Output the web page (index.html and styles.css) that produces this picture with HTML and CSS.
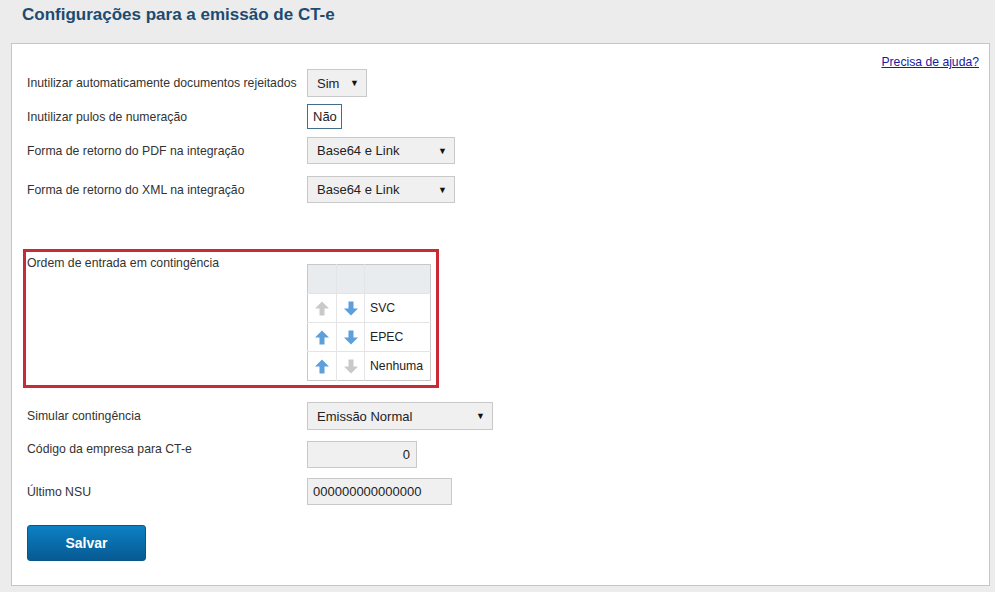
FILE: index.html
```html
<!DOCTYPE html>
<html lang="pt">
<head>
<meta charset="utf-8">
<title>Configurações para a emissão de CT-e</title>
<link rel="stylesheet" href="styles.css">
</head>
<body>
<h1 class="title">Configurações para a emissão de CT-e</h1>
<div class="panel">
  <div class="help"><a href="#">Precisa de ajuda?</a></div>

  <div class="row r1">
    <div class="label">Inutilizar automaticamente documentos rejeitados</div>
    <div class="select w-sim"><span>Sim</span><span class="caret">▼</span></div>
  </div>

  <div class="row r2">
    <div class="label">Inutilizar pulos de numeração</div>
    <div class="toggle">Não</div>
  </div>

  <div class="row r3">
    <div class="label">Forma de retorno do PDF na integração</div>
    <div class="select w-base"><span>Base64 e Link</span><span class="caret">▼</span></div>
  </div>

  <div class="row r4">
    <div class="label">Forma de retorno do XML na integração</div>
    <div class="select w-base"><span>Base64 e Link</span><span class="caret">▼</span></div>
  </div>

  <div class="highlight">
    <div class="label top">Ordem de entrada em contingência</div>
    <table class="order">
      <tr class="head"><td class="c1"></td><td class="c2"></td><td class="c3"></td></tr>
      <tr>
        <td class="c1"><svg class="arr off" viewBox="0 0 14 14"><path d="M7 0 L14 7 L9.5 7 L9.5 14 L4.5 14 L4.5 7 L0 7 Z"/></svg></td>
        <td class="c2"><svg class="arr on down" viewBox="0 0 14 14"><path d="M7 0 L14 7 L9.5 7 L9.5 14 L4.5 14 L4.5 7 L0 7 Z"/></svg></td>
        <td class="c3">SVC</td>
      </tr>
      <tr>
        <td class="c1"><svg class="arr on" viewBox="0 0 14 14"><path d="M7 0 L14 7 L9.5 7 L9.5 14 L4.5 14 L4.5 7 L0 7 Z"/></svg></td>
        <td class="c2"><svg class="arr on down" viewBox="0 0 14 14"><path d="M7 0 L14 7 L9.5 7 L9.5 14 L4.5 14 L4.5 7 L0 7 Z"/></svg></td>
        <td class="c3">EPEC</td>
      </tr>
      <tr>
        <td class="c1"><svg class="arr on" viewBox="0 0 14 14"><path d="M7 0 L14 7 L9.5 7 L9.5 14 L4.5 14 L4.5 7 L0 7 Z"/></svg></td>
        <td class="c2"><svg class="arr off down" viewBox="0 0 14 14"><path d="M7 0 L14 7 L9.5 7 L9.5 14 L4.5 14 L4.5 7 L0 7 Z"/></svg></td>
        <td class="c3">Nenhuma</td>
      </tr>
    </table>
  </div>

  <div class="row r5">
    <div class="label">Simular contingência</div>
    <div class="select w-sim2"><span>Emissão Normal</span><span class="caret">▼</span></div>
  </div>

  <div class="row r6">
    <div class="label up">Código da empresa para CT-e</div>
    <div class="input w-cod right">0</div>
  </div>

  <div class="row r7">
    <div class="label">Último NSU</div>
    <div class="input w-nsu">000000000000000</div>
  </div>

  <button class="btn">Salvar</button>
</div>
</body>
</html>
```

FILE: styles.css
```css
html, body {
  margin: 0;
  padding: 0;
}
body {
  background: #ececec;
  font-family: "Liberation Sans", Arial, sans-serif;
  color: #333;
  font-size: 12px;
  width: 995px;
  height: 592px;
  overflow: hidden;
}
.title {
  margin: 0;
  padding: 5px 0 0 22px;
  height: 43px;
  box-sizing: border-box;
  font-size: 17px;
  line-height: 20px;
  font-weight: bold;
  color: #1d4b70;
}
.panel {
  margin-left: 11px;
  width: 979px;
  box-sizing: border-box;
  background: #fff;
  border: 1px solid #c6c6c6;
  padding: 0 10px 24px 15px;
}
.help {
  text-align: right;
  padding-top: 11px;
  line-height: 14px;
  height: 25px;
  box-sizing: border-box;
}
.help a {
  color: #1a1aa0;
  text-decoration: underline;
  font-size: 12.2px;
}
.row {
  display: flex;
  align-items: center;
}
.label {
  width: 280px;
  flex: none;
  line-height: 14px;
  font-size: 12.25px;
  color: #333;
}
.r1 { height: 28px; }
.r2 { height: 25px; margin-top: 7px; }
.r3 { height: 27px; margin-top: 8px; }
.r4 { height: 27px; margin-top: 12px; }
.r5 { height: 28px; margin-top: 14px; }
.r6 { height: 27px; margin-top: 11px; }
.r7 { height: 27px; margin-top: 10px; }
.label.up { align-self: flex-start; padding-top: 1px; }

.select {
  box-sizing: border-box;
  height: 100%;
  background: #f0f0f0;
  border: 1px solid #c9c9c9;
  display: flex;
  align-items: center;
  justify-content: space-between;
  padding: 0 7px 0 9px;
  font-size: 13px;
  color: #222;
}
.caret {
  font-size: 9px;
  color: #111;
}
.w-sim { width: 60px; }
.w-base { width: 148px; }
.w-sim2 { width: 186px; }

.toggle {
  box-sizing: border-box;
  height: 25px;
  width: 35px;
  border: 1px solid #3f6f8c;
  background: #fff;
  font-size: 13px;
  color: #222;
  display: flex;
  align-items: center;
  padding-left: 5px;
}

.input {
  box-sizing: border-box;
  height: 100%;
  background: #f0f0f0;
  border: 1px solid #c9c9c9;
  display: flex;
  align-items: center;
  padding: 0 6px 0 5px;
  font-size: 13px;
  color: #222;
}
.input.right { justify-content: flex-end; }
.w-cod { width: 110px; }
.w-nsu { width: 145px; }

.highlight {
  margin-top: 46px;
  margin-left: -4px;
  width: 416px;
  height: 139px;
  box-sizing: border-box;
  border: 3px solid #c92a35;
  display: flex;
  align-items: flex-start;
  padding: 4px 0 0 1px;
}
.order {
  margin-top: 8px;
  border-collapse: collapse;
  border: 1px solid #c8c8c8;
  font-size: 12.25px;
  color: #222;
}
.order td {
  height: 28px;
  padding: 0;
  border-top: 1px solid #e4e4e4;
  border-right: 1px solid #e4e4e4;
  vertical-align: middle;
}
.order tr.head td {
  background: #e9ecef;
  border-top: none;
}
.order td.c1 { width: 28px; text-align: center; }
.order td.c2 { width: 27px; text-align: center; }
.order td.c3 { width: 60px; padding-left: 5px; border-right: none; }
.arr {
  width: 14px;
  height: 15px;
  display: block;
  margin: 0 auto;
}
.arr.on { fill: #5d9fdb; }
.arr.off { fill: #c9c9c9; }
.arr.down { transform: rotate(180deg); }

.btn {
  display: block;
  margin-top: 20px;
  width: 119px;
  height: 36px;
  border: 1px solid #0a5688;
  border-radius: 3px;
  background: linear-gradient(#0c80c4, #075a92);
  color: #fff;
  font-family: "Liberation Sans", Arial, sans-serif;
  font-weight: bold;
  font-size: 14px;
  padding: 0;
  cursor: pointer;
}
```
